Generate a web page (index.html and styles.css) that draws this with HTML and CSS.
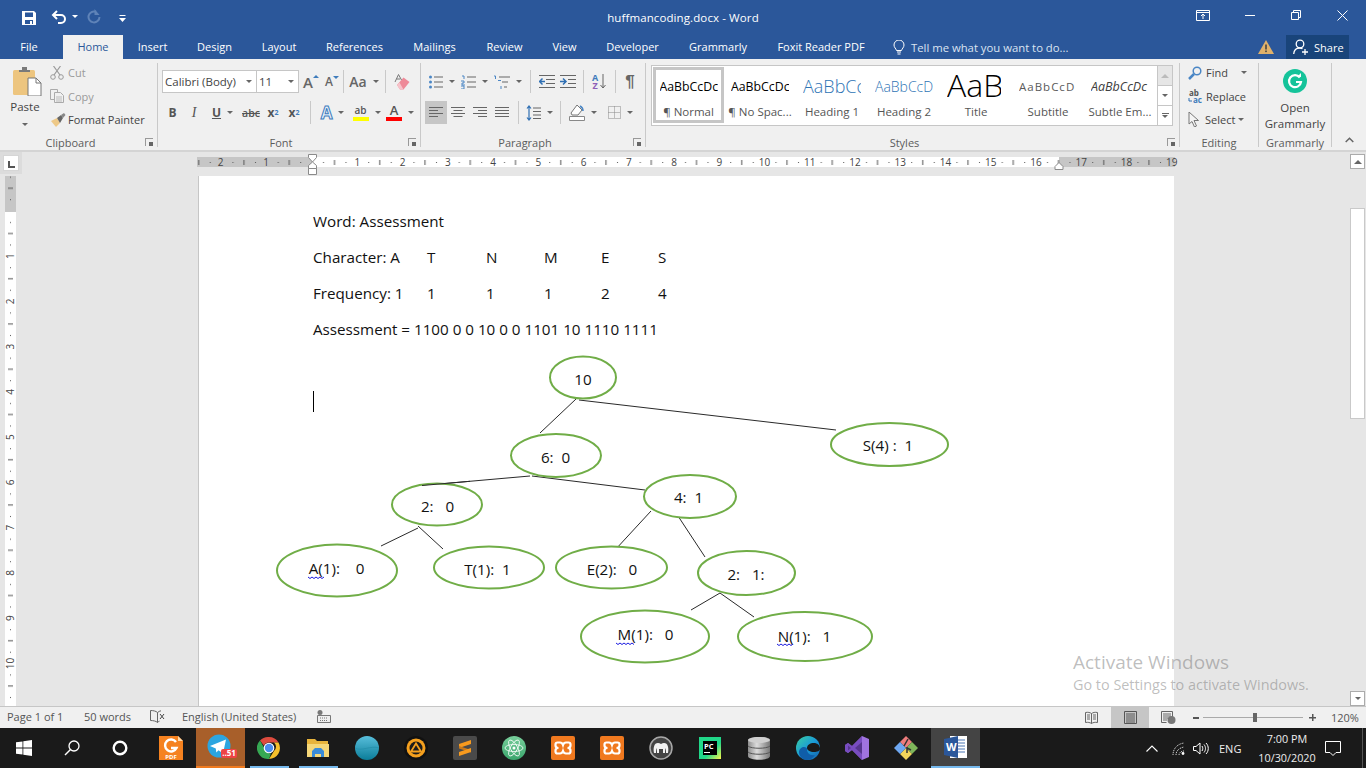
FILE: index.html
```html
<!DOCTYPE html>
<html lang="en">
<head>
<meta charset="utf-8">
<title>huffmancoding.docx - Word</title>
<link rel="stylesheet" href="styles.css">
</head>
<body>
<div class="app">
  <header class="titlebar">
    <div class="qat">
      <svg class="q-save" width="16" height="16" viewBox="0 0 16 16"><path d="M1 1h12l2 2v12H1z" fill="#fff"/><rect x="4" y="2.500" width="8" height="4.500" fill="#2b579a"/><rect x="4" y="10" width="8" height="4" fill="#2b579a"/><rect x="9" y="11" width="2" height="3" fill="#fff"/></svg>
      <svg class="q-undo" width="16" height="14" viewBox="0 0 16 14"><path d="M2 5h8a4 4 0 0 1 0 8H7" fill="none" stroke="#fff" stroke-width="2"/><path d="M6 1 2 5l4 4" fill="none" stroke="#fff" stroke-width="2"/></svg>
      <i class="tri tri-w q-a1"></i>
      <svg class="q-redo" width="14" height="15" viewBox="0 0 14 15"><path d="M9 2.800A5.500 5.500 0 1 0 12.500 8" fill="none" stroke="#5f83b8" stroke-width="2"/><path d="M7.500 0v6h5z" fill="#5f83b8"/></svg>
      <svg class="q-more" width="7" height="8" viewBox="0 0 7 8"><rect width="6" height="1" fill="#fff" x=".5"/><path d="M0 3h7L3.500 7z" fill="#fff"/></svg>
    </div>
    <div class="doc-title">huffmancoding.docx - Word</div>
    <div class="winbtns">
      <svg class="w-disp" width="14" height="11" viewBox="0 0 14 11"><path d="M.5.500h13v10H.5zM1 2.500h12" fill="none" stroke="#fff"/><path d="M7 9V4M5 6l2-2 2 2" fill="none" stroke="#fff"/></svg>
      <svg class="w-min" width="10" height="2" viewBox="0 0 10 2"><rect y="0" width="10" height="1" fill="#fff"/></svg>
      <svg class="w-res" width="10" height="10" viewBox="0 0 10 10"><path d="M.5 2.500h7v7h-7zM2.500 2.500v-2h7v7h-2" fill="none" stroke="#fff"/></svg>
      <svg class="w-close" width="11" height="11" viewBox="0 0 11 11"><path d="M.5.500l10 10M10.500.500l-10 10" stroke="#fff" fill="none"/></svg>
    </div>
  </header>

  <nav class="tabs">
    <span class="tab tab-file">File</span><span class="tab tab-on">Home</span><span class="tab">Insert</span><span class="tab">Design</span><span class="tab">Layout</span><span class="tab">References</span><span class="tab">Mailings</span><span class="tab">Review</span><span class="tab">View</span><span class="tab">Developer</span><span class="tab">Grammarly</span><span class="tab">Foxit Reader PDF</span>
    <span class="tell">
      <svg width="12" height="15" viewBox="0 0 12 15"><path d="M3.500 10.500C3 8.500 1 7.500 1 5a5 5 0 0 1 10 0c0 2.500-2 3.500-2.500 5.500z" fill="none" stroke="#fff"/><path d="M4 12h4M4.500 14h3" stroke="#fff"/></svg>
      <span>Tell me what you want to do...</span>
    </span>
    <svg class="warn" width="16" height="14" viewBox="0 0 16 14"><path d="M8 0l8 14H0z" fill="#e0b16a"/><rect x="7.200" y="4.500" width="1.600" height="5" fill="#444"/><rect x="7.200" y="10.500" width="1.600" height="1.600" fill="#444"/></svg>
    <span class="share">
      <svg width="16" height="16" viewBox="0 0 16 16"><circle cx="7" cy="5" r="3.800" fill="none" stroke="#fff" stroke-width="1.300"/><path d="M.7 15c.3-3.500 2.500-6 6-6 1 0 2 .2 2.800.7" fill="none" stroke="#fff" stroke-width="1.300"/><path d="M12 10v6M9 13h6" stroke="#fff" stroke-width="1.300"/></svg>
      <span>Share</span>
    </span>
  </nav>

  <section class="ribbon">
    <div class="group g-clip">
      <div class="g-body clip-body">
        <div class="paste">
          <svg class="paste-i" width="29" height="29" viewBox="0 0 29 29"><rect x="0" y="3" width="22" height="25" rx="1.500" fill="#edc57f"/><path d="M6 5V3h3V0h5v3h3v2z" fill="#7a7a7a"/><path d="M15 11h8l5 5v13H15z" fill="#fff" stroke="#777"/><path d="M23 11v5h5" fill="none" stroke="#777"/></svg>
          <span class="paste-t">Paste</span>
          <i class="tri"></i>
        </div>
        <div class="clip-rows">
          <div class="crow dis"><svg width="14" height="14" viewBox="0 0 14 14"><circle cx="3" cy="11" r="2.300" fill="none" stroke="#9a9a9a"/><circle cx="11" cy="11" r="2.300" fill="none" stroke="#9a9a9a"/><path d="M4 9 10.500 0M10 9 3.500 0" stroke="#9a9a9a" fill="none" stroke-width="1.200"/></svg><span>Cut</span></div>
          <div class="crow dis"><svg width="14" height="14" viewBox="0 0 14 14"><path d="M.5.500h7v10h-7z" fill="#f0f0f0" stroke="#aaa"/><path d="M4.500 3.500h6l3 3v7h-9z" fill="#f0f0f0" stroke="#aaa"/><path d="M6 8h6M6 10h6M6 12h6" stroke="#bbb"/></svg><span>Copy</span></div>
          <div class="crow"><svg class="wide-i" width="16" height="14" viewBox="0 0 16 14"><path d="M1 8l6-3 3 5-4 4z" fill="#eec988"/><path d="M7 5l4-3 2 3-3 5z" fill="#666"/><path d="M11 2l3-2 1.500 2-2.500 3z" fill="#888"/></svg><span>Format Painter</span></div>
        </div>
      </div>
      <div class="g-label g-label-l">Clipboard<i class="launch"></i></div>
    </div>

    <div class="group g-font">
      <div class="g-body rows">
        <div class="grid font-r1">
          <span class="combo">Calibri (Body)<i class="tri"></i></span>
          <span class="combo">11<i class="tri"></i></span>
          <span class="ic"><span class="big-a">A<sup class="up"></sup></span></span>
          <span class="ic"><span class="small-a">A<sup class="down"></sup></span></span>
          <span class="sep"></span>
          <span class="ic"><span class="aa">Aa</span><i class="tri"></i></span>
          <span class="sep"></span>
          <span class="ic"><svg width="16" height="16" viewBox="0 0 16 16"><path d="M3 11l6.500-7.500 6 4.500-6 7.500H6z" fill="#ee8a98"/><path d="M3 11l3 4.500h3.500L5.500 8.500z" fill="#f7c3ca"/><path d="M1 8 4.500 .5 7.500 6M2.500 5h3.500" stroke="#777" fill="none"/></svg></span>
        </div>
        <div class="grid font-r2">
          <span class="ic fmt b">B</span>
          <span class="ic fmt i">I</span>
          <span class="ic"><span class="fmt u">U</span><i class="tri"></i></span>
          <span class="ic fmt s">abc</span>
          <span class="ic fmt x">x<sub>2</sub></span>
          <span class="ic fmt x">x<sup>2</sup></span>
          <span class="sep"></span>
          <span class="ic"><span class="fx-a">A</span><i class="tri"></i></span>
          <span class="ic"><span class="col-a"><span class="ab">ab</span><b class="bar yel"></b></span><i class="tri"></i></span>
          <span class="ic"><span class="col-a"><span class="aa2">A</span><b class="bar red"></b></span><i class="tri"></i></span>
        </div>
      </div>
      <div class="g-label g-label-l">Font<i class="launch"></i></div>
    </div>

    <div class="group g-para">
      <div class="g-body rows">
        <div class="grid para-r1">
          <span class="ic"><svg width="14" height="14" viewBox="0 0 14 14"><path d="M5 2h9M5 7h9M5 12h9" stroke="#666"/><circle cx="1.500" cy="2" r="1.500" fill="#4a86c5"/><circle cx="1.500" cy="7" r="1.500" fill="#4a86c5"/><circle cx="1.500" cy="12" r="1.500" fill="#4a86c5"/></svg><i class="tri"></i></span>
          <span class="ic"><svg width="15" height="14" viewBox="0 0 15 14"><path d="M6 2h9M6 7h9M6 12h9" stroke="#666"/><path d="M1 1h2v3M0 6h3v2H1v2h3M0 11h3v3H0" stroke="#4a86c5" fill="none"/></svg><i class="tri"></i></span>
          <span class="ic"><svg width="17" height="14" viewBox="0 0 17 14"><path d="M6 2h11M9 7h6M11 12h3" stroke="#666"/><path d="M1 1h1.500v3M5 5.500h3M8 11v3" stroke="#4a86c5" fill="none"/></svg><i class="tri"></i></span>
          <span class="sep"></span>
          <span class="ic"><svg width="16" height="13" viewBox="0 0 16 13"><path d="M0 .5h16M7 4.500h9M7 8.500h9M0 12.500h16" stroke="#666"/><path d="M6 6.500H1M3.500 3.500l-3 3 3 3" stroke="#2f6fb3" stroke-width="1.500" fill="none"/></svg></span>
          <span class="ic"><svg width="16" height="13" viewBox="0 0 16 13"><path d="M0 .5h16M8 4.500h8M8 8.500h8M0 12.500h16" stroke="#666"/><path d="M0 6.500h5M3 3.500l3 3-3 3" stroke="#2f6fb3" stroke-width="1.500" fill="none"/></svg></span>
          <span class="sep"></span>
          <span class="ic sort"><span class="sort-l"><b class="az-a">A</b><b class="az-z">Z</b></span><svg width="6" height="15" viewBox="0 0 6 15"><path d="M3 0v14M.5 11 3 14l2.500-3" stroke="#666" fill="none"/></svg></span>
          <span class="sep"></span>
          <span class="ic pil">¶</span>
        </div>
        <div class="grid para-r2">
          <span class="ic on"><svg width="14" height="11" viewBox="0 0 14 11"><path d="M0 .5h14M0 3.500h9M0 6.500h14M0 9.500h9" stroke="#666"/></svg></span>
          <span class="ic"><svg width="14" height="11" viewBox="0 0 14 11"><path d="M0 .5h14M2.500 3.500h9M0 6.500h14M2.500 9.500h9" stroke="#666"/></svg></span>
          <span class="ic"><svg width="14" height="11" viewBox="0 0 14 11"><path d="M0 .5h14M5 3.500h9M0 6.500h14M5 9.500h9" stroke="#666"/></svg></span>
          <span class="ic"><svg width="14" height="11" viewBox="0 0 14 11"><path d="M0 .5h14M0 3.500h14M0 6.500h14M0 9.500h14" stroke="#666"/></svg></span>
          <span class="sep"></span>
          <span class="ic"><svg width="15" height="16" viewBox="0 0 15 16"><path d="M3 1v14M1 3.500 3 1l2 2.500M1 12.500 3 15l2-2.500" stroke="#2f6fb3" fill="none" stroke-width="1.200"/><path d="M7 3h8M7 6.500h8M7 10h8M7 13.500h8" stroke="#666"/></svg><i class="tri"></i></span>
          <span class="sep"></span>
          <span class="ic"><svg width="16" height="17" viewBox="0 0 16 17"><path d="M2 9l6-8 5 5-4 5H3z" fill="#fff" stroke="#777"/><path d="M11 2c2 1 3 3 3 5" stroke="#4a86c5" stroke-width="1.500" fill="none"/><path d="M.5 12.500h15v4H.5z" fill="#fff" stroke="#888"/></svg><i class="tri"></i></span>
          <span class="ic"><svg width="13" height="13" viewBox="0 0 13 13"><path d="M.5.500h12v12H.5zM.5 6.500h12M6.500.500v12" stroke="#888" fill="none" stroke-dasharray="1 1"/></svg><i class="tri"></i></span>
        </div>
      </div>
      <div class="g-label g-label-l">Paragraph<i class="launch"></i></div>
    </div>

    <div class="group g-styles">
      <div class="g-body">
        <div class="gallery">
          <div class="style st-sel"><span class="pv pv-n">AaBbCcDc</span><span class="lb">¶ Normal</span></div>
          <div class="style"><span class="pv pv-n">AaBbCcDc</span><span class="lb">¶ No Spac...</span></div>
          <div class="style"><span class="pv pv-h1">AaBbCc</span><span class="lb">Heading 1</span></div>
          <div class="style"><span class="pv pv-h2">AaBbCcD</span><span class="lb">Heading 2</span></div>
          <div class="style"><span class="pv pv-t">AaB</span><span class="lb">Title</span></div>
          <div class="style"><span class="pv pv-s">AaBbCcD</span><span class="lb">Subtitle</span></div>
          <div class="style"><span class="pv pv-e">AaBbCcDc</span><span class="lb">Subtle Em...</span></div>
          <div class="gal-btns">
            <span class="gb gb-dis"><i class="tri-up"></i></span>
            <span class="gb"><i class="tri"></i></span>
            <span class="gb gb-more"><b></b><i class="tri"></i></span>
          </div>
        </div>
      </div>
      <div class="g-label g-label-l">Styles<i class="launch"></i></div>
    </div>

    <div class="group g-edit">
      <div class="g-body edit-rows">
        <div class="crow"><svg width="14" height="14" viewBox="0 0 14 14"><circle cx="9" cy="5" r="3.800" fill="none" stroke="#4a86c5" stroke-width="1.500"/><path d="M6 8l-5 5" stroke="#4a86c5" stroke-width="2.500"/></svg><span>Find</span><i class="tri"></i></div>
        <div class="crow"><svg class="wide-i" width="16" height="15" viewBox="0 0 16 15"><text x="1" y="7" class="rep-a">ab</text><text x="5" y="14" class="rep-b">ac</text><path d="M1 9v3h3" stroke="#2f6fb3" fill="none"/></svg><span>Replace</span></div>
        <div class="crow"><svg width="13" height="15" viewBox="0 0 13 15"><path d="M1 0v12l3-2.500L6.500 15l2-1L6 8.500h4.500z" fill="#f4f4f4" stroke="#777"/></svg><span>Select</span><i class="tri tight"></i></div>
      </div>
      <div class="g-label">Editing</div>
    </div>

    <div class="group g-gram">
      <div class="g-body gram-body">
        <svg width="24" height="24" viewBox="0 0 24 24"><circle cx="12" cy="12" r="12" fill="#15c39a"/><path d="M16.800 8.500A6 6 0 1 0 18 13h-5" fill="none" stroke="#fff" stroke-width="2.200"/><path d="M14 8h4V4z" fill="#fff"/></svg>
        <span class="gram-t">Open<br>Grammarly</span>
      </div>
      <div class="g-label">Grammarly</div>
    </div>
    <div class="collapse"><svg width="9" height="6" viewBox="0 0 9 6"><path d="M.7 5 4.500 1.200 8.300 5" fill="none" stroke="#666" stroke-width="1.500"/></svg></div>
  </section>

  <main class="workspace">
    <div class="work-main">
      <div class="ruler-row">
        <span class="tabsel"><b></b></span>
        <svg class="hruler" width="978" height="24" viewBox="197 0 978 24">
          <defs>
            <pattern id="hticks" x="312" y="0" width="45.250" height="24" patternUnits="userSpaceOnUse">
              <rect x="11" y="10" width="1" height="1" fill="#555"/>
              <rect x="22" y="8" width="1" height="5" fill="#555"/>
              <rect x="33.500" y="10" width="1" height="1" fill="#555"/>
            </pattern>
          </defs>
          <rect x="197" y="5" width="978" height="10" fill="#c6c6c6"/>
          <rect x="312" y="5" width="747" height="10" fill="#fff"/>
          <rect x="197" y="5" width="978" height="10" fill="url(#hticks)"/>
          <g class="rn">
            <text x="220.500" y="14">2</text><text x="266" y="14">1</text><text x="357.250" y="14">1</text><text x="402.500" y="14">2</text><text x="447.750" y="14">3</text><text x="493" y="14">4</text><text x="538.250" y="14">5</text><text x="583.500" y="14">6</text><text x="628.750" y="14">7</text><text x="674" y="14">8</text><text x="719.250" y="14">9</text><text x="764.500" y="14">10</text><text x="809.750" y="14">11</text><text x="855" y="14">12</text><text x="900.250" y="14">13</text><text x="945.500" y="14">14</text><text x="990.750" y="14">15</text><text x="1036" y="14">16</text><text x="1081.250" y="14">17</text><text x="1126.500" y="14">18</text><text x="1171.750" y="14">19</text>
          </g>
          <path d="M308.500 2.500h8v3l-4 4.500-4-4.500zM308.500 16.500v-3l4-3.500 4 3.500v3zM308.500 16.500h8v6h-8z" fill="#fff" stroke="#8a8a8a"/>
          <path d="M1055 17.500v-3l4-4 4 4v3z" fill="#fff" stroke="#8a8a8a"/>
        </svg>
      </div>
      <div class="doc-row">
        <div class="side-left">
          <svg class="vruler" width="11" height="530" viewBox="0 176 11 530">
            <defs>
              <pattern id="vticks" x="0" y="211" width="11" height="45.250" patternUnits="userSpaceOnUse">
                <rect x="5" y="11" width="1" height="1" fill="#555"/>
                <rect x="3" y="22" width="5" height="1" fill="#555"/>
                <rect x="5" y="33.500" width="1" height="1" fill="#555"/>
              </pattern>
            </defs>
            <rect x="0" y="176" width="11" height="530" fill="#fff"/>
            <rect x="0" y="176" width="11" height="36" fill="#c6c6c6"/>
            <rect x="0" y="176" width="11" height="530" fill="url(#vticks)"/>
            <g class="rn">
              <text transform="translate(9 256.250) rotate(-90)">1</text><text transform="translate(9 301.500) rotate(-90)">2</text><text transform="translate(9 346.750) rotate(-90)">3</text><text transform="translate(9 392) rotate(-90)">4</text><text transform="translate(9 437.250) rotate(-90)">5</text><text transform="translate(9 482.500) rotate(-90)">6</text><text transform="translate(9 527.750) rotate(-90)">7</text><text transform="translate(9 573) rotate(-90)">8</text><text transform="translate(9 618.250) rotate(-90)">9</text><text transform="translate(9 663.500) rotate(-90)">10</text>
            </g>
          </svg>
        </div>
        <article class="page">
          <p class="line">Word: Assessment</p>
          <div class="line tabbed"><span>Character: A</span><span>T</span><span>N</span><span>M</span><span>E</span><span>S</span></div>
          <div class="line tabbed"><span>Frequency: 1</span><span>1</span><span>1</span><span>1</span><span>2</span><span>4</span></div>
          <p class="line">Assessment = 1100 0 0 10 0 0 1101 10 1110 1111</p>
          <p class="line"></p>
          <p class="line"><i class="caret"></i></p>
          <svg class="tree" width="975" height="530" viewBox="199 176 975 530">
            <g class="edges">
              <path d="M576 399 540 433M579 400 836 430M530 476 422 485.500M532 476 645 490M418 528 381 546M418 526 443 549M651 511 615 550M678 516 705 557M720 593 691 610M720 593 754 617"/>
            </g>
            <g class="nodes">
              <ellipse cx="583" cy="377.500" rx="33" ry="21"/>
              <ellipse cx="556" cy="455.500" rx="45" ry="21.500"/>
              <ellipse cx="437" cy="504.500" rx="45" ry="21"/>
              <ellipse cx="337" cy="570.500" rx="60" ry="26"/>
              <ellipse cx="489" cy="567.500" rx="55" ry="21"/>
              <ellipse cx="611.500" cy="567.500" rx="55.500" ry="21"/>
              <ellipse cx="645" cy="636.500" rx="64" ry="26"/>
              <ellipse cx="805" cy="636.500" rx="67" ry="24.500"/>
              <ellipse cx="746.500" cy="573" rx="48.500" ry="22"/>
              <ellipse cx="690" cy="496.500" rx="46" ry="21.500"/>
              <ellipse cx="889.500" cy="444.500" rx="58.500" ry="21.500"/>
            </g>
            <g class="edges">
              <path d="M422 485.500 470 481.300"/>
            </g>
            <g class="labels">
              <text x="583" y="385">10</text>
              <text x="555.500" y="463" xml:space="preserve">6:  0</text>
              <text x="437.500" y="512" xml:space="preserve">2:   0</text>
              <text x="336.500" y="574" xml:space="preserve">A(1):    0</text>
              <text x="487.500" y="575" xml:space="preserve">T(1):  1</text>
              <text x="612" y="575" xml:space="preserve">E(2):   0</text>
              <text x="645.500" y="640" xml:space="preserve">M(1):   0</text>
              <text x="804.500" y="642" xml:space="preserve">N(1):   1</text>
              <text x="746" y="580" xml:space="preserve">2:   1:</text>
              <text x="688.500" y="503" xml:space="preserve">4:  1</text>
              <text x="888" y="451" xml:space="preserve">S(4) :  1</text>
            </g>
            <g class="squig">
              <path d="M308 577l2 1.500 2-1.500 2 1.500 2-1.500 2 1.500 2-1.500 2 1.500 2-1.500"/>
              <path d="M616 643l2 1.500 2-1.500 2 1.500 2-1.500 2 1.500 2-1.500 2 1.500 2-1.500 2 1.500"/>
              <path d="M777 644l2 1.500 2-1.500 2 1.500 2-1.500 2 1.500 2-1.500 2 1.500 2-1.500"/>
            </g>
          </svg>
        </article>
        <div class="side-right"></div>
      </div>
    </div>
    <aside class="vscroll">
      <span class="sb-btn"><i class="tri-up"></i></span>
      <span class="sb-track"><b class="sb-thumb"></b></span>
      <span class="sb-btn"><i class="tri"></i></span>
    </aside>
  </main>

  <footer class="status">
    <span class="st-page">Page 1 of 1</span>
    <span class="st-words">50 words</span>
    <svg class="st-i1" width="15" height="13" viewBox="0 0 15 13"><path d="M7.500 2.500C6 1 3 .5.500.5v10c2.500 0 5.500.5 7 2 .5-.5 1-1 2-1.300M7.500 2.500v10M7.500 2.500C8.500 1.500 10 1 11 .8" fill="none" stroke="#666"/><path d="M10 4l4 5M14 4l-4 5" stroke="#444" fill="none"/></svg>
    <span class="st-lang">English (United States)</span>
    <svg class="st-i2" width="14" height="13" viewBox="0 0 14 13"><circle cx="3" cy="2.500" r="2.500" fill="#777"/><path d="M.5 5.500h13v7H.5z" fill="#eee" stroke="#777"/><path d="M3 8h8M3 10.500h8" stroke="#777" stroke-dasharray="1 1"/></svg>
    <span class="st-grow"></span>
    <svg class="st-read" width="13" height="13" viewBox="0 0 13 13"><path d="M.5 1.500C3 1 5 1.500 6.500 2.500 8 1.500 10 1 12.500 1.500v10C10 11 8 11.500 6.500 12.500 5 11.500 3 11 .5 11.500zM6.500 2.500v10M2 4h3M2 6h3M2 8h3M8 4h3M8 6h3M8 8h3" fill="none" stroke="#666"/></svg>
    <span class="st-print"><svg width="13" height="13" viewBox="0 0 13 13"><path d="M.5.500h12v12H.5zM2 3h9M2 5h9M2 7h9M2 9h9M2 11h9" fill="none" stroke="#555"/></svg></span>
    <svg class="st-web" width="15" height="13" viewBox="0 0 15 13"><path d="M.5.500h11v6M.5.500v11h5M2 3h8M2 5h8M2 7h5M2 9h4" fill="none" stroke="#666"/><circle cx="10.500" cy="9" r="4" fill="#777"/></svg>
    <span class="zoom">
      <b class="z-minus"></b>
      <span class="z-track"><b class="z-thumb"></b></span>
      <b class="z-plus"></b>
    </span>
    <span class="st-pct">120%</span>
  </footer>

  <footer class="taskbar">
    <span class="tk tk-sys"><svg width="16" height="16" viewBox="0 0 16 16"><path d="M0 2.300 6.500 1.400v6.200H0zM7.300 1.300 16 0v7.600H7.300zM0 8.400h6.500v6.200L0 13.700zM7.300 8.400H16V16l-8.700-1.300z" fill="#fff"/></svg></span>
    <span class="tk tk-sys"><svg width="16" height="16" viewBox="0 0 16 16"><circle cx="10" cy="6" r="5" fill="none" stroke="#fff" stroke-width="1.300"/><path d="M6.500 9.500 1 15" stroke="#fff" stroke-width="1.500"/></svg></span>
    <span class="tk tk-sys"><svg width="16" height="16" viewBox="0 0 16 16"><circle cx="8" cy="8" r="6.300" fill="none" stroke="#fff" stroke-width="2.400"/></svg></span>
    <span class="tk tk-foxit">
      <svg width="24" height="24" viewBox="0 0 24 24"><path d="M0 0h19l5 5v19H0z" fill="#f58220"/><path d="M19 0l5 5h-5z" fill="#ffd9a8"/><path d="M17 6a6 6 0 1 0 .5 6H12" fill="none" stroke="#fff" stroke-width="2.400"/><text x="12" y="22.500" class="fx-t">PDF</text></svg>
    </span>
    <span class="tk tk-tele">
      <svg width="36" height="28" viewBox="0 0 36 28"><circle cx="14" cy="13" r="11.500" fill="#2ca5e0"/><path d="M5 13l16-6.500-3 14-4.500-3.300-2.200 2.300-.5-4z" fill="#fff"/><rect x="16" y="16" width="16" height="9" rx="2" fill="#ee4444"/><text x="24" y="23.300" class="tl-t">..51</text></svg>
    </span>
    <span class="tk tk-run"><svg width="24" height="24" viewBox="0 0 24 24"><path d="M12 1a11 11 0 0 1 9.500 5.500H12a5.500 5.500 0 0 0-5 3.300L3 4.500A11 11 0 0 1 12 1z" fill="#dd4b3e"/><path d="M21.500 6.500A11 11 0 0 1 12 23l5-8a5.500 5.500 0 0 0 0-8.500z" fill="#f6c02c"/><path d="M3 4.500l4.500 8a5.500 5.500 0 0 0 6.500 4.800L12 23A11 11 0 0 1 3 4.500z" fill="#36a853"/><circle cx="12" cy="12" r="5.300" fill="#fff"/><circle cx="12" cy="12" r="4.200" fill="#4b8df0"/></svg></span>
    <span class="tk tk-run"><svg width="22" height="20" viewBox="0 0 22 20"><path d="M0 1h8l2 2h11v15H0z" fill="#e8b43c"/><rect x="0" y="6" width="22" height="13" fill="#f5d779"/><path d="M5 19v-6l3-3h6l3 3v6h-3v-3H8v3z" fill="#3a8bd8"/></svg></span>
    <span class="tk"><svg width="24" height="24" viewBox="0 0 24 24"><defs><linearGradient id="sph" x1="0" y1="0" x2="0" y2="1"><stop offset="0" stop-color="#58bedb"/><stop offset="1" stop-color="#0b7d99"/></linearGradient></defs><circle cx="12" cy="12" r="12" fill="url(#sph)"/><path d="M0 12c6 4 16-3 24 0" fill="none" stroke="#2792ae" stroke-width="1"/></svg></span>
    <span class="tk"><svg width="24" height="24" viewBox="0 0 24 24"><circle cx="12" cy="12" r="12" fill="#111"/><circle cx="12" cy="12" r="9.500" fill="#f5a01e"/><circle cx="12" cy="12" r="6.500" fill="#1c1c1c"/><path d="M12 7.500l5 8H7z" fill="none" stroke="#f5a01e" stroke-width="1.800"/></svg></span>
    <span class="tk"><svg width="24" height="24" viewBox="0 0 24 24"><rect width="24" height="24" rx="2" fill="#4a4a4a"/><path d="M18 4 6 8v4l12-4z" fill="#f79a1e"/><path d="M6 10l12 4v2.500L6 12.500z" fill="#c9791a"/><path d="M18 12 6 16v4l12-4z" fill="#f79a1e"/></svg></span>
    <span class="tk"><svg width="24" height="24" viewBox="0 0 24 24"><defs><linearGradient id="atm" x1="0" y1="0" x2="0" y2="1"><stop offset="0" stop-color="#78cf9b"/><stop offset="1" stop-color="#3aa56c"/></linearGradient></defs><circle cx="12" cy="12" r="12" fill="url(#atm)"/><g fill="none" stroke="#fff" stroke-width=".8"><ellipse cx="12" cy="12" rx="9" ry="3.500"/><ellipse cx="12" cy="12" rx="9" ry="3.500" transform="rotate(60 12 12)"/><ellipse cx="12" cy="12" rx="9" ry="3.500" transform="rotate(120 12 12)"/></g><circle cx="12" cy="12" r="1.500" fill="#fff"/></svg></span>
    <span class="tk"><svg width="24" height="24" viewBox="0 0 24 24"><rect width="24" height="24" rx="2" fill="#f0791f"/><path d="M9 6.500H6.500a2 2 0 0 0-2 2v1c0 1.500 1.500 2.500 3 2.500-1.500 0-3 1-3 2.500v1a2 2 0 0 0 2 2H9c1.500 0 2.500-1 3-2.500.5 1.500 1.500 2.500 3 2.500h2.500a2 2 0 0 0 2-2v-1c0-1.500-1.500-2.500-3-2.500 1.500 0 3-1 3-2.500v-1a2 2 0 0 0-2-2H15c-1.500 0-2.500 1-3 2.500C11.500 7.500 10.500 6.500 9 6.500z" fill="none" stroke="#fff" stroke-width="2.200"/></svg></span>
    <span class="tk"><svg width="24" height="24" viewBox="0 0 24 24"><rect width="24" height="24" rx="2" fill="#f0791f"/><path d="M9 6.500H6.500a2 2 0 0 0-2 2v1c0 1.500 1.500 2.500 3 2.500-1.500 0-3 1-3 2.500v1a2 2 0 0 0 2 2H9c1.500 0 2.500-1 3-2.500.5 1.500 1.500 2.500 3 2.500h2.500a2 2 0 0 0 2-2v-1c0-1.500-1.500-2.500-3-2.500 1.500 0 3-1 3-2.500v-1a2 2 0 0 0-2-2H15c-1.500 0-2.500 1-3 2.500C11.500 7.500 10.500 6.500 9 6.500z" fill="none" stroke="#fff" stroke-width="2.200"/></svg></span>
    <span class="tk"><svg width="24" height="24" viewBox="0 0 24 24"><circle cx="12" cy="12" r="11" fill="#444" stroke="#a8a8a8" stroke-width="1.500"/><path d="M5 17c-1-5 0-10 4-10 1 0 2 .5 3 1 1-.5 2-1 3-1 4 0 5 5 4 10h-2c0-2 0-3-1-5v5h-2v-4h-4v4H8v-5c-1 2-1 3-1 5z" fill="#f2f2f2"/></svg></span>
    <span class="tk"><svg width="22" height="22" viewBox="0 0 22 22"><defs><linearGradient id="pyc" x1="0" y1="0" x2="1" y2="1"><stop offset="0" stop-color="#21d789"/><stop offset=".6" stop-color="#21d789"/><stop offset="1" stop-color="#fcf84a"/></linearGradient></defs><rect width="22" height="22" fill="url(#pyc)"/><rect x="4" y="4" width="14" height="14" fill="#000"/><text x="5" y="11.500" class="pc-t">PC</text><rect x="5" y="15" width="6" height="1" fill="#fff"/></svg></span>
    <span class="tk"><svg width="24" height="24" viewBox="0 0 24 24"><defs><linearGradient id="dbg" x1="0" y1="0" x2="1" y2="0"><stop offset="0" stop-color="#8d8d8d"/><stop offset=".4" stop-color="#dcdcdc"/><stop offset="1" stop-color="#777"/></linearGradient></defs><path d="M1 4c0-4 22-4 22 0v16c0 5-22 5-22 0z" fill="url(#dbg)"/><ellipse cx="12" cy="4" rx="11" ry="3" fill="#cfcfcf"/><path d="M1 10c3 3 19 3 22 0M1 16c3 3 19 3 22 0" fill="none" stroke="#555"/></svg></span>
    <span class="tk"><svg width="24" height="24" viewBox="0 0 24 24"><defs><linearGradient id="edg" x1="0" y1="0" x2="1" y2="1"><stop offset="0" stop-color="#3bd0a0"/><stop offset=".5" stop-color="#1a9bd8"/><stop offset="1" stop-color="#1561a8"/></linearGradient></defs><circle cx="12" cy="12" r="12" fill="url(#edg)"/><path d="M24 13c0 2-3 3-6 3-4 0-7-2-7-4 0-3 3-5 7-5 3 0 6 2 6 6z" fill="#1a1a1a"/><path d="M11 13c0 4 3 7 8 6-2 3-5 5-8 5-5 0-8-4-8-8 0-3 3-5 5-5 2 0 3 1 3 2z" fill="#0f5da8"/></svg></span>
    <span class="tk"><svg width="24" height="24" viewBox="0 0 24 24"><path d="M17 0l7 3v18l-7 3L7 14l-4 3-3-2V9l3-2 4 3z" fill="#a073e0"/><path d="M17 6v12l-7-6z" fill="#1a1a1a"/><path d="M3 9.500v5L6 12z" fill="#1a1a1a"/><path d="M17 0 7 10 3 7l-3 2v6l3 2 4-3 10 10z" fill="#6b3fb5" opacity=".75"/></svg></span>
    <span class="tk"><svg width="24" height="24" viewBox="0 0 24 24"><path d="M12 12 6 6l6-6 6 6z" fill="#ee7c7c"/><path d="M12 12l6-6 6 6-6 6z" fill="#7fb55a"/><path d="M12 12l6 6-6 6-6-6z" fill="#f3d55b"/><path d="M12 12l-6 6-6-6 6-6z" fill="#6ea8f2"/><path d="M14 3 10 10M13 11v6M13 12l4 2" stroke="#333" stroke-width="1.500" fill="none"/></svg></span>
    <span class="tk tk-word"><svg width="23" height="22" viewBox="0 0 23 22"><path d="M6 0h17v22H6z" fill="#fff"/><path d="M10 4h11M10 7h11M10 10h11M10 13h11M10 16h11" stroke="#4a76b5"/><path d="M0 3l14-3v22L0 19z" fill="#2b579a"/><text x="2" y="15" class="wd-t">W</text></svg></span>
    <span class="tk-grow"></span>
    <svg class="tr-chev" width="12" height="7" viewBox="0 0 12 7"><path d="M.5 6.500 6 1l5.500 5.500" fill="none" stroke="#fff" stroke-width="1.100"/></svg>
    <svg class="tr-wifi" width="13" height="13" viewBox="0 0 13 13"><path d="M1 13C1 7 5 2 12 1M4 13c0-4 3-7 8-8M7 13c0-2 2-4 5-4" fill="none" stroke="#d0d0d0" stroke-dasharray="1.200 .8"/><circle cx="11" cy="11.500" r="1.400" fill="#fff"/></svg>
    <svg class="tr-vol" width="16" height="13" viewBox="0 0 16 13"><path d="M.5 4.500h2.500L7 1v11L3 8.500H.5z" fill="none" stroke="#fff"/><path d="M9 4c1 1.500 1 3.500 0 5M11 2.500c2 2.500 2 5.500 0 8M13 1c3 3 3 8 0 11" fill="none" stroke="#fff"/></svg>
    <span class="tr-lang">ENG</span>
    <span class="tr-clock">7:00 PM<br>10/30/2020</span>
    <svg class="tr-note" width="16" height="15" viewBox="0 0 16 15"><path d="M.5.500h15v11h-4.500l-3 3-3-3H.5z" fill="none" stroke="#fff"/></svg>
    <span class="tr-line"></span>
  </footer>
</div>
<div class="activate">
  <div class="ac-1">Activate Windows</div>
  <div class="ac-2">Go to Settings to activate Windows.</div>
</div>
</body>
</html>
```
FILE: styles.css
```css
* { box-sizing: border-box; }
html, body { margin: 0; padding: 0; }
body { width: 1366px; height: 768px; overflow: hidden; position: relative; font-family: "Open Sans", "Noto Sans", sans-serif; font-size: 11.5px; color: #444; background: #e6e6e6; }
i, b { font-style: normal; font-weight: normal; }
svg { display: block; flex: none; }
.app { display: flex; flex-direction: column; width: 1366px; height: 768px; }

/* title bar */
.titlebar { height: 35px; background: #2b579a; display: grid; grid-template-columns: 1fr auto 1fr; align-items: center; color: #fff; }
.qat { display: flex; align-items: center; padding-left: 21px; }
.q-undo { margin-left: 14px; margin-top: -2px; }
.q-a1 { margin-left: 5px; margin-top: -2px; }
.q-redo { margin-left: 9px; margin-top: -2px; }
.q-more { margin-left: 18px; margin-top: 2px; }
.doc-title { font-size: 11.5px; letter-spacing: .1px; }
.winbtns { display: flex; align-items: center; justify-content: flex-end; padding-right: 18px; margin-top: -5px; }
.w-min { margin-left: 35px; margin-top: 1px; }
.w-res { margin-left: 36px; }
.w-close { margin-left: 36px; }

/* tabs */
.tabs { height: 24px; background: #2b579a; display: grid; grid-template-columns: 63px 60px 59px 65px 64px 87px 73px 67px 53px 83px 88px 118px 377px 29px 63px; align-items: center; color: #fff; }
.tab { text-align: center; font-size: 11px; line-height: 24px; height: 24px; white-space: nowrap; }
.tab-file { padding-right: 5px; }
.tab-on { background: #f0f0f0; color: #2b579a; }
.tell { display: flex; align-items: center; gap: 6px; padding-left: 13px; color: #dbe4f1; font-size: 11.300px; }
.warn { margin-left: 1px; }
.share { height: 24px; background: #19447a; display: flex; align-items: center; gap: 5px; padding-left: 7px; font-size: 11px; }

/* ribbon */
.ribbon { height: 93px; background: #f0f0f0; border-bottom: 2px solid #d4d4d4; display: flex; align-items: flex-start; flex: none; }
.group { position: relative; margin-top: 4px; height: 84px; border-right: 1px solid #c9c9c9; display: flex; flex-direction: column; flex: none; }
.g-body { height: 73px; flex: none; }
.g-label { position: relative; height: 11px; line-height: 13px; font-size: 11px; text-align: center; color: #5c5c5c; white-space: nowrap; }
.g-label-l { padding-right: 16px; }
.launch { position: absolute; right: 4px; top: 2px; width: 8px; height: 8px; border-left: 1px solid #999; border-top: 1px solid #999; }
.launch::after { content: ""; position: absolute; right: 0; bottom: 0; width: 4px; height: 4px; background: #666; }
.g-clip { width: 158px; }
.g-font { width: 263px; }
.g-para { width: 225px; }
.g-styles { width: 534px; }
.g-edit { width: 79px; }
.g-gram { width: 73px; }
.collapse { flex: 1; display: flex; justify-content: center; align-items: flex-end; height: 88px; padding-bottom: 4px; }

.tri { display: inline-block; width: 0; height: 0; border-left: 3.500px solid transparent; border-right: 3.500px solid transparent; border-top: 3.500px solid #666; flex: none; }
.titlebar .tri { border-top-color: #fff; }
.tri-up { display: inline-block; width: 0; height: 0; border-left: 4px solid transparent; border-right: 4px solid transparent; border-bottom: 4px solid #666; }

.clip-body { display: flex; }
.paste { width: 50px; display: flex; flex-direction: column; align-items: center; padding-top: 4px; flex: none; }
.paste-i { margin-left: 4px; }
.paste-t { font-size: 11.500px; line-height: 14px; margin-top: 4px; color: #444; }
.paste .tri { margin-top: 9px; }
.clip-rows, .edit-rows { display: flex; flex-direction: column; margin-top: -2px; }
.crow { height: 23px; display: flex; align-items: center; gap: 4px; white-space: nowrap; color: #444; font-size: 11px; }
.crow:nth-child(2) { height: 24px; }
.crow.dis { color: #9a9a9a; }
.crow .tri { margin-left: 9px; }
.crow .tri.tight { margin-left: -1px; }
.wide-i { margin-right: -2px; }
.edit-rows { padding-left: 8px; height: 75px; }

.rows { display: flex; flex-direction: column; padding: 7px 0 0 4px; gap: 8px; }
.grid { display: grid; height: 23px; align-items: center; }
.font-r1 { grid-template-columns: 94px 42px 20px 22px 6px 36px 6px 27px; }
.font-r2 { grid-template-columns: 21px 22px 35px 22px 22px 20px 12px 33px 35px 32px; }
.para-r1 { grid-template-columns: 33px 33px 33px 12px 21px 22px 8px 24px 8px 22px; }
.para-r2 { grid-template-columns: 22px 22px 22px 22px 10px 32px 10px 35px 40px; }
.combo { height: 23px; background: #fff; border: 1px solid #c6c6c6; display: flex; align-items: center; justify-content: space-between; padding: 0 4px 0 2px; font-size: 11.500px; color: #444; margin-right: -1px; }
.ic { display: flex; align-items: center; justify-content: center; gap: 6px; height: 23px; color: #555; }
.ic.on { background: #c6c6c6; }
.sep { justify-self: center; width: 1px; height: 23px; background: #c9c9c9; }
.big-a, .small-a { position: relative; font-weight: 600; color: #666; display: inline-block; }
.big-a { font-size: 15px; }
.small-a { font-size: 12px; }
.up, .down { position: absolute; right: -6px; top: 3px; width: 0; height: 0; border-left: 3px solid transparent; border-right: 3px solid transparent; }
.up { border-bottom: 3px solid #3f7cbc; }
.down { border-top: 3px solid #3f7cbc; }
.aa { font-size: 14px; font-weight: 600; color: #666; }
.fmt { font-size: 12px; color: #555; }
.b { font-weight: 700; }
.i { font-style: italic; font-family: "Liberation Serif", serif; font-size: 14px; }
.u { font-weight: 700; text-decoration: underline; }
.s { font-size: 10.500px; text-decoration: line-through; font-weight: 600; }
.ic.x { font-weight: 700; gap: 0; }
.x sub, .x sup { font-size: 7px; line-height: 1; color: #3f7cbc; }
.fx-a { font-size: 17px; font-weight: 700; color: #e8f1fb; -webkit-text-stroke: 1px #3f7cbc; line-height: 20px; }
.col-a { display: flex; flex-direction: column; align-items: center; width: 16px; }
.ab { font-size: 10px; line-height: 11px; color: #555; font-weight: 600; }
.aa2 { font-size: 13px; line-height: 11px; color: #555; font-weight: 600; }
.bar { display: block; height: 4px; width: 16px; margin-top: 1px; }
.yel { background: #ffff00; }
.red { background: #ff0000; }
.sort { gap: 2px; }
.sort-l { display: flex; flex-direction: column; align-items: center; line-height: 8px; font-size: 9px; }
.az-a { color: #3f7cbc; font-weight: 700; }
.az-z { color: #8e5fb8; font-weight: 700; }
.pil { font-size: 17px; color: #666; font-family: "Liberation Sans", sans-serif; font-weight: 700; }

/* gallery */
.g-styles .g-body { padding: 2px 0 0 5px; }
.gallery { width: 522px; height: 61px; border: 1px solid #c6c6c6; background: #fff; display: flex; overflow: hidden; position: relative; }
.style { width: 72px; flex: none; height: 59px; display: flex; flex-direction: column; align-items: center; overflow: hidden; padding-top: 4px; position: relative; }
.style.st-sel { width: 71px; border: 3px solid #c6c6c6; padding-top: 0; margin: 1px 0 0 1px; height: 56px; }
.pv { height: 33px; line-height: 33px; display: block; width: 58px; overflow: hidden; white-space: nowrap; text-align: left; font-family: "Open Sans", sans-serif; font-weight: 300; color: #000; flex: none; }
.pv-n { font-size: 12.300px; font-weight: 400; }
.pv-h1 { font-size: 18px; color: #2e74b5; }
.pv-h2 { font-size: 14px; color: #2e74b5; }
.pv-t { font-size: 32px; line-height: 29px; width: 54px; margin-right: 4px; }
.pv-s { font-size: 11.500px; font-weight: 400; color: #5a5a5a; letter-spacing: 1px; }
.pv-e { font-size: 12.500px; font-weight: 400; font-style: italic; color: #404040; }
.lb { font-size: 11.500px; line-height: 14px; margin-top: 2px; color: #555; white-space: nowrap; }
.gal-btns { position: absolute; right: 0; top: 0; width: 15px; height: 59px; border-left: 1px solid #c6c6c6; display: flex; flex-direction: column; background: #fff; }
.gb { flex: 1; display: flex; align-items: center; justify-content: center; border-bottom: 1px solid #c6c6c6; flex-direction: column; gap: 1px; }
.gb:last-child { border-bottom: 0; }
.gb-dis { background: #e6e6e6; }
.gb-dis .tri-up { border-bottom-color: #bbb; }
.gb-more b { width: 7px; height: 1px; background: #666; }

.rep-a { font: 700 8px "Open Sans", sans-serif; fill: #555; }
.rep-b { font: 700 8px "Open Sans", sans-serif; fill: #3f7cbc; }

.gram-body { display: flex; flex-direction: column; align-items: center; padding-top: 6px; }
.gram-t { text-align: center; line-height: 16px; margin-top: 7px; color: #444; font-size: 11.500px; }

/* workspace */
.workspace { height: 554px; flex: none; display: flex; background: #e6e6e6; }
.work-main { flex: 1; display: flex; flex-direction: column; min-width: 0; }
.ruler-row { height: 24px; display: flex; flex: none; }
.tabsel { width: 22px; height: 22px; background: #dcdcdc; display: flex; align-items: center; justify-content: center; flex: none; }
.tabsel b { width: 16px; height: 16px; background: #fff; border: 1px solid #d6d6d6; position: relative; }
.tabsel b::after { content: ""; position: absolute; left: 4px; top: 5px; width: 5px; height: 5px; border-left: 2px solid #555; border-bottom: 2px solid #555; }
.hruler { margin-left: 175px; overflow: visible; }
.vruler { overflow: visible; }
.rn text { font: 10px "Open Sans", sans-serif; fill: #444; text-anchor: middle; }
.doc-row { height: 530px; display: flex; flex: none; }
.side-left { width: 198px; flex: none; padding-left: 5px; }
.page { width: 976px; flex: none; background: #fff; border-left: 1px solid #c6c6c6; position: relative; padding: 27px 0 0 114px; font-family: "Open Sans", sans-serif; font-size: 15.200px; color: #111; overflow: hidden; }
.side-right { flex: 1; }
.line { margin: 0; height: 36px; line-height: 36px; white-space: pre; }
.tabbed { display: grid; grid-template-columns: 114px 59px 58px 57px 57px 57px; }
.line .caret { display: block; width: 1px; height: 21px; background: #000; margin-top: 8px; }
.tree { position: absolute; left: 0; top: 0; }
.edges path { stroke: #2a2a2a; stroke-width: 1; fill: none; }
.nodes ellipse { fill: #fff; stroke: #70ad47; stroke-width: 2; }
.labels text { font-family: "Open Sans", sans-serif; font-size: 15.200px; fill: #111; text-anchor: middle; white-space: pre; }
.squig path { fill: none; stroke: #1a1ae0; stroke-width: 1; }

.vscroll { width: 16px; flex: none; display: flex; flex-direction: column; padding-top: 2px; }
.sb-btn { height: 15px; width: 15px; background: #fff; border: 1px solid #ababab; display: flex; align-items: center; justify-content: center; flex: none; }
.sb-track { flex: 1; padding-top: 39px; display: block; }
.sb-thumb { display: block; width: 15px; height: 211px; background: #fff; border: 1px solid #c9c9c9; }

/* status */
.status { height: 22px; flex: none; background: #f0f0f0; border-top: 1px solid #c6c6c6; display: flex; align-items: center; color: #555; font-size: 11px; white-space: nowrap; padding-bottom: 2px; }
.st-page { width: 84px; padding-left: 7px; flex: none; }
.st-words { width: 66px; flex: none; }
.st-i1 { margin-right: 17px; }
.st-lang { width: 135px; flex: none; }
.st-grow { flex: 1; }
.st-read { margin-top: 2px; }
.st-web { margin-top: 2px; }
.st-print { width: 38px; height: 21px; background: #c6c6c6; display: flex; align-items: center; justify-content: center; margin: 0 12px -2px 13px; flex: none; }
.zoom { display: flex; align-items: center; margin-left: 17px; width: 123px; flex: none; margin-top: 2px; }
.z-minus { width: 6px; height: 2px; background: #555; flex: none; }
.z-track { width: 100px; height: 1px; background: #aaa; margin: 0 6px 0 4px; position: relative; flex: none; }
.z-thumb { position: absolute; left: 50px; top: -4px; width: 4px; height: 9px; background: #666; }
.z-plus { width: 7px; height: 7px; flex: none; background: linear-gradient(#555, #555) center / 100% 1.500px no-repeat, linear-gradient(#555, #555) center / 1.500px 100% no-repeat; }
.st-pct { width: 50px; padding-left: 15px; flex: none; margin-top: 2px; }

/* taskbar */
.taskbar { height: 40px; flex: none; background: #1a1a1a; display: flex; align-items: center; color: #fff; }
.tk { width: 49px; height: 40px; display: flex; align-items: center; justify-content: center; flex: none; position: relative; }
.tk-sys { width: 48px; }
.tk-foxit { margin-left: 2.500px; }
.tk-tele { background: #a85f2a; border-bottom: 2px solid #f07a1e; padding-left: 5px; }
.tk-run::after { content: ""; position: absolute; left: 5px; right: 5px; bottom: 0; height: 2px; background: #76b9ed; }
.tk-word { background: #444; border-bottom: 2px solid #76b9ed; }
.tk-grow { flex: 1; }
.fx-t { font: 700 6px "Open Sans", sans-serif; fill: #fff; text-anchor: middle; }
.tl-t { font: 700 8px "Open Sans", sans-serif; fill: #fff; text-anchor: middle; }
.pc-t { font: 700 7.500px "Open Sans", sans-serif; fill: #fff; }
.wd-t { font: 700 11px "Open Sans", sans-serif; fill: #fff; }
.tr-wifi { margin-left: 14px; }
.tr-vol { margin-left: 8px; }
.tr-lang { margin-left: 10px; width: 33px; font-size: 11px; color: #eee; flex: none; }
.tr-clock { width: 70px; text-align: center; font-size: 10.800px; line-height: 19px; color: #eee; flex: none; margin-top: -1px; }
.tr-note { margin-left: 3px; }
.tr-line { width: 1px; height: 40px; background: #555; margin: 0 3px 0 21px; flex: none; }

/* watermark over the page */
.activate { position: absolute; left: 1073px; top: 649px; color: rgba(110, 110, 110, .45); pointer-events: none; white-space: nowrap; }
.ac-1 { font-size: 19px; line-height: 26px; }
.ac-2 { font-size: 14.400px; line-height: 20px; }
```
